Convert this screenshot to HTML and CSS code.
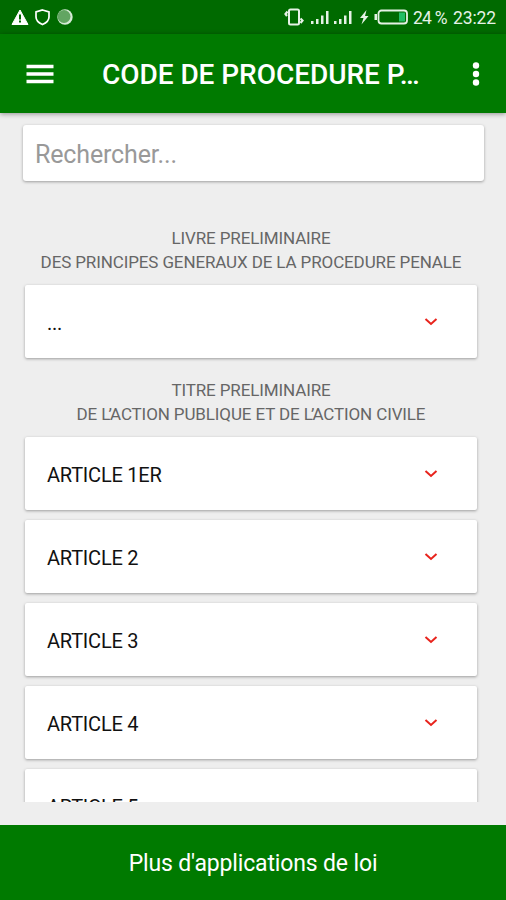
FILE: index.html
```html
<!DOCTYPE html>
<html lang="fr">
<head>
    <meta charset="utf-8">
    <title>Code de procedure penale</title>
    <link rel="stylesheet" href="styles.css">
</head>
<body>
    <div class="status-bar">
        <div class="status-left">
            <svg width="66" height="20" viewBox="0 0 66 20">
                <path d="M9 3 17 17.500H1z" fill="#fff" stroke="#fff" stroke-linejoin="round"/>
                <path d="M9 7.500v5M9 13.500v2" stroke="#006a00" stroke-width="2"/>
                <path d="M31.500 3 38 5v5c0 3.500-3 6-6.500 7.500C28 16 25 13.500 25 10V5z" fill="none" stroke="#fff" stroke-width="1.700"/>
                <circle cx="54" cy="10" r="7.700" fill="#d5ead5"/>
                <circle cx="53" cy="9.500" r="6.500" fill="#62a562"/>
            </svg>
        </div>
        <div class="status-right">
            <svg width="125" height="20" viewBox="0 0 125 20">
                <g fill="none" stroke="#e6f2e6" stroke-width="2">
                    <rect x="5" y="2.500" width="10" height="15" rx="1.500"/>
                    <path d="M3.500 4.500 1.500 7l1.500 2M16.500 11.500l2 2-2 2.500" stroke-width="2.200"/>
                </g>
                <g fill="#e6f2e6">
                    <path d="M27 14h2.500v3H27zM32 12h2.500v5H32zM37 8.500h2.500V17H37zM42 4h2.500v13H42z"/>
                    <path d="M50 14h2.500v3H50zM55 12h2.500v5H55zM60 8.500h2.500V17H60zM65 4h2.500v13H65z"/>
                    <path d="M82.500 3 76 11h3.500l-2 6.500L84.500 9H81z"/>
                    <rect x="90.500" y="7" width="2.500" height="6"/>
                </g>
                <rect x="94.500" y="3.500" width="28.500" height="13" rx="3" fill="none" stroke="#e6f2e6" stroke-width="1.800"/>
                <rect x="115" y="5.500" width="6" height="9" fill="#22bd65"/>
            </svg>
            <span class="battery">24 %</span>
            <span class="clock">23:22</span>
        </div>
    </div>

    <div class="toolbar">
        <svg class="menu-icon" width="28" height="20" viewBox="0 0 28 20">
            <path d="M.5 2.500h27M.5 10h27M.5 17.500h27" stroke="#fff" stroke-width="3.500"/>
        </svg>
        <h1>CODE DE PROCEDURE P…</h1>
        <svg class="more-icon" width="8" height="24" viewBox="0 0 8 24" fill="#fff">
            <circle cx="4" cy="3.500" r="3.200"/>
            <circle cx="4" cy="12" r="3.200"/>
            <circle cx="4" cy="20.500" r="3.200"/>
        </svg>
    </div>

    <input class="search" type="text" placeholder="Rechercher...">

    <div class="list">
        <h2>LIVRE PRELIMINAIRE<br>DES PRINCIPES GENERAUX DE LA PROCEDURE PENALE</h2>
        <div class="card">
            <span>...</span>
            <svg class="arrow" width="14" height="10" viewBox="0 0 14 10"><path d="m1.500 2 5.500 5 5.500-5"/></svg>
        </div>

        <h2>TITRE PRELIMINAIRE<br>DE <span class="elision">L’</span>ACTION PUBLIQUE ET DE <span class="elision">L’</span>ACTION CIVILE</h2>
        <div class="card">
            <span>ARTICLE 1ER</span>
            <svg class="arrow" width="14" height="10" viewBox="0 0 14 10"><path d="m1.500 2 5.500 5 5.500-5"/></svg>
        </div>
        <div class="card">
            <span>ARTICLE 2</span>
            <svg class="arrow" width="14" height="10" viewBox="0 0 14 10"><path d="m1.500 2 5.500 5 5.500-5"/></svg>
        </div>
        <div class="card">
            <span>ARTICLE 3</span>
            <svg class="arrow" width="14" height="10" viewBox="0 0 14 10"><path d="m1.500 2 5.500 5 5.500-5"/></svg>
        </div>
        <div class="card">
            <span>ARTICLE 4</span>
            <svg class="arrow" width="14" height="10" viewBox="0 0 14 10"><path d="m1.500 2 5.500 5 5.500-5"/></svg>
        </div>
        <div class="card">
            <span>ARTICLE 5</span>
            <svg class="arrow" width="14" height="10" viewBox="0 0 14 10"><path d="m1.500 2 5.500 5 5.500-5"/></svg>
        </div>
    </div>

    <div class="footer">Plus d'applications de loi</div>
</body>
</html>
```
FILE: styles.css
```css
* {
    box-sizing: border-box;
}

body {
    margin: 0;
    height: 900px;
    display: flex;
    flex-direction: column;
    overflow: hidden;
    background-color: #eee;
    font-family: Roboto, sans-serif;
}

/* Phone status bar */
.status-bar {
    height: 34px;
    flex: none;
    display: flex;
    justify-content: space-between;
    align-items: center;
    padding: 0 10px 0 11px;
    background-color: #006a00;
    color: #e6f2e6;
    font-size: 17.5px;
}

.status-left,
.status-right {
    display: flex;
    align-items: center;
}

.battery {
    margin: 2px 6px 0 4px;
    letter-spacing: -0.7px;
    white-space: nowrap;
}

.clock {
    margin-top: 2px;
    letter-spacing: -0.1px;
}

/* Green title bar */
.toolbar {
    height: 79px;
    flex: none;
    display: flex;
    align-items: center;
    padding: 0 26px;
    background-color: #007a00;
    box-shadow: 0 1px 5px rgba(0, 0, 0, 0.4);
}

.toolbar h1 {
    flex: 1;
    margin: 2px 0 0 48px;
    color: #fff;
    font-size: 28px;
    font-weight: 500;
    letter-spacing: -0.05px;
    white-space: nowrap;
}

.search {
    width: 461px;
    height: 56px;
    flex: none;
    margin: 12px 0 0 23px;
    padding: 2px 12px 0;
    border: 0;
    border-radius: 3px;
    background-color: #fff;
    box-shadow: 0 1px 3px rgba(0, 0, 0, 0.35);
    font-family: inherit;
    font-size: 25px;
    letter-spacing: -0.15px;
}

.search::placeholder {
    color: #999;
}

/* Scrolling list of articles */
.list {
    height: 585px;
    flex: none;
    margin-top: 36px;
    padding: 9px 29px 0 25px;
    overflow: hidden;
}

.list h2 {
    margin: 0 0 11px;
    color: #666;
    font-size: 17px;
    font-weight: 400;
    letter-spacing: -0.12px;
    line-height: 24px;
    text-align: center;
    white-space: nowrap;
}

/* Pulls the apostrophe in between L and A */
.elision {
    letter-spacing: -1.9px;
}

.card {
    height: 73px;
    display: flex;
    justify-content: space-between;
    align-items: center;
    margin-bottom: 10px;
    padding: 3px 39px 0 22px;
    border-radius: 2px;
    background-color: #fff;
    box-shadow: 0 1px 3px rgba(0, 0, 0, 0.35);
    color: #111;
    font-size: 20px;
    letter-spacing: -0.22px;
}

.list .card + h2 {
    margin-top: 20px;
}

.arrow {
    margin-top: -2px;
    fill: none;
    stroke: #e8231c;
    stroke-width: 2;
}

.footer {
    height: 75px;
    margin-top: auto;
    display: flex;
    justify-content: center;
    align-items: center;
    padding-top: 2px;
    background-color: #007a00;
    color: #fff;
    font-size: 23px;
    letter-spacing: -0.15px;
}
```
